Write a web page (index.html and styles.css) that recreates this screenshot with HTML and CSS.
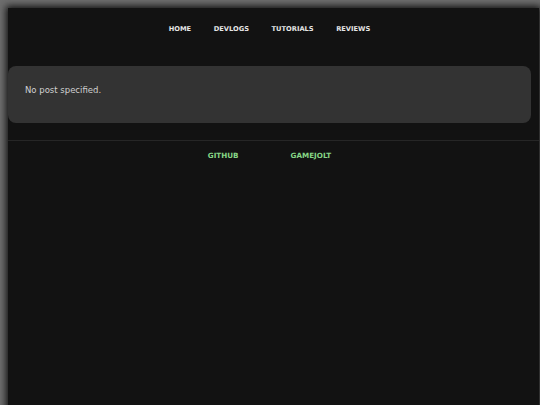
FILE: index.html
```html
<!DOCTYPE html>
<html>
<head>
<meta charset="utf-8">
<link rel="stylesheet" href="styles.css">
</head>
<body>
<div class="page">
  <div class="content">
    <nav class="nav">
      <a class="nav-link" href="#">HOME</a>
      <a class="nav-link" href="#">DEVLOGS</a>
      <a class="nav-link" href="#">TUTORIALS</a>
      <a class="nav-link" href="#">REVIEWS</a>
    </nav>
    <div class="card">No post specified.</div>
  </div>
  <footer class="footer">
    <a class="foot-link" href="#">GITHUB</a>
    <a class="foot-link" href="#">GAMEJOLT</a>
  </footer>
</div>
</body>
</html>
```

FILE: styles.css
```css
html, body {
  margin: 0;
  padding: 0;
  height: 100%;
  overflow: hidden;
}
body {
  background: #6e6e6e;
  font-family: "DejaVu Sans", Verdana, sans-serif;
  padding: 8px 1px 0 8px;
  box-sizing: border-box;
}
.page {
  background: #121212;
  box-shadow: 0 0 7px 2px #111;
  min-height: 420px;
}
.content {
  margin-right: 8px;
}
.nav {
  display: flex;
  justify-content: center;
  gap: 22.5px;
  padding: 16px 0 14px;
  line-height: 10px;
}
.nav-link {
  color: #e6e6e6;
  text-decoration: none;
  font-size: 6.7px;
  font-weight: bold;
}
.card {
  margin-top: 18px;
  background: #333333;
  border-radius: 8px;
  color: #d0d0d0;
  font-size: 8.5px;
  line-height: 12px;
  padding: 18px 17px 27px;
}
.footer {
  margin-top: 17px;
  border-top: 1px solid #262626;
  display: flex;
  justify-content: center;
  gap: 52px;
  padding: 10px 8px 0 0;
  line-height: 10px;
}
.foot-link {
  color: #86d686;
  text-decoration: none;
  font-size: 7.2px;
  font-weight: bold;
}
```
